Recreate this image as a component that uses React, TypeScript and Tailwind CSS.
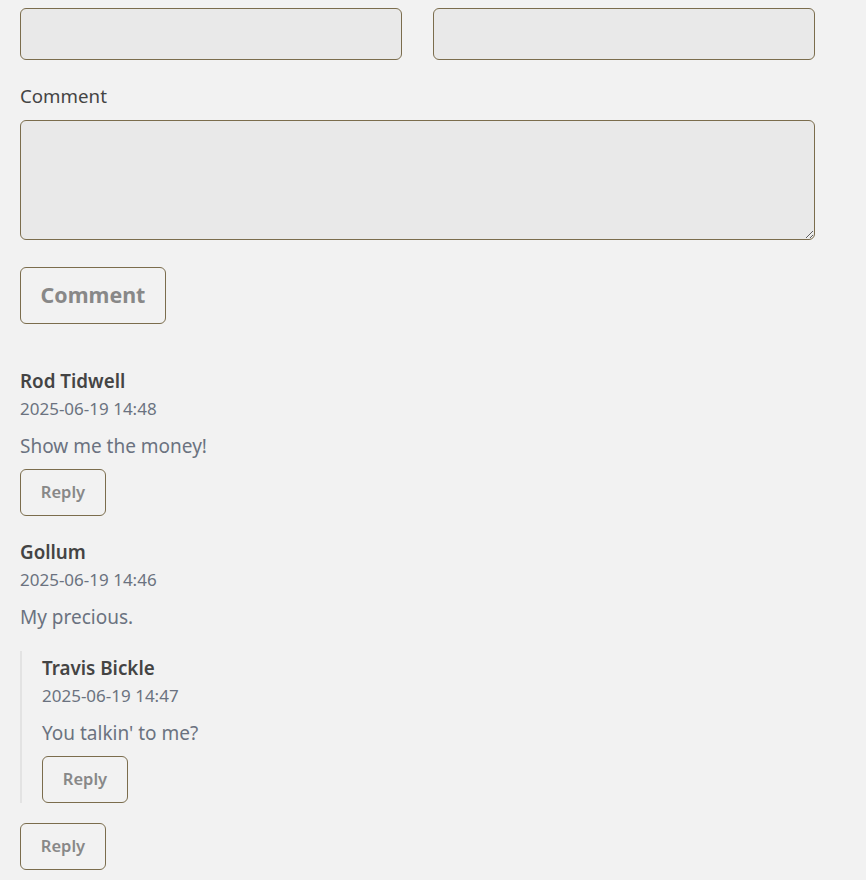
import React from "react";

const font = { fontFamily: '"Noto Sans", "Open Sans", sans-serif' };

function ReplyButton() {
  return (
    <button className="h-[47px] w-[86px] rounded-[6px] border border-[#7b6d4d] bg-transparent text-[16.5px] font-semibold text-[#888888]">
      Reply
    </button>
  );
}

type C = { name: string; date: string; text: string; replies?: C[] };

function Comment({ c }: { c: C }) {
  return (
    <div className="flex flex-col items-start">
      <div className="text-[18.8px] leading-[27px] font-semibold text-[#444444]">{c.name}</div>
      <div className="text-[17px] leading-[27px] text-[#6b7280]">{c.date}</div>
      <div className="mt-[10px] text-[19px] leading-[28px] text-[#6b7280]">{c.text}</div>
      {c.replies && c.replies.length > 0 ? (
        <>
          <div className="mt-[20px] mb-[20px] w-full border-l-[2px] border-[#e3e3e3] pl-[20px] pt-[4px]">
            {c.replies.map((r, i) => (
              <Comment key={i} c={r} />
            ))}
          </div>
          <ReplyButton />
        </>
      ) : (
        <div className="mt-[9px]">
          <ReplyButton />
        </div>
      )}
    </div>
  );
}

export default function App() {
  const comments: C[] = [
    { name: "Rod Tidwell", date: "2025-06-19 14:48", text: "Show me the money!" },
    {
      name: "Gollum",
      date: "2025-06-19 14:46",
      text: "My precious.",
      replies: [{ name: "Travis Bickle", date: "2025-06-19 14:47", text: "You talkin' to me?" }],
    },
  ];
  return (
    <div className="min-h-[880px] bg-[#f2f2f2] pt-[8px] pl-[20px]" style={font}>
      <div className="w-[795px]">
        <div className="grid grid-cols-2 gap-[31px]">
          <input className="h-[52px] rounded-[6px] border border-[#7b6d4d] bg-[#e9e9e9]" />
          <input className="h-[52px] rounded-[6px] border border-[#7b6d4d] bg-[#e9e9e9]" />
        </div>
        <div className="mt-[22px] text-[18.7px] leading-[27px] text-[#444444]">Comment</div>
        <textarea className="mt-[11px] block h-[120px] w-full rounded-[6px] border border-[#7b6d4d] bg-[#e9e9e9]" />
        <button className="mt-[27px] h-[57px] w-[146px] rounded-[6px] border border-[#7b6d4d] text-[21.4px] font-bold text-[#888888]">
          Comment
        </button>
        <div className="mt-[44px] flex flex-col gap-[23px]">
          {comments.map((c, i) => (
            <Comment key={i} c={c} />
          ))}
        </div>
      </div>
    </div>
  );
}
